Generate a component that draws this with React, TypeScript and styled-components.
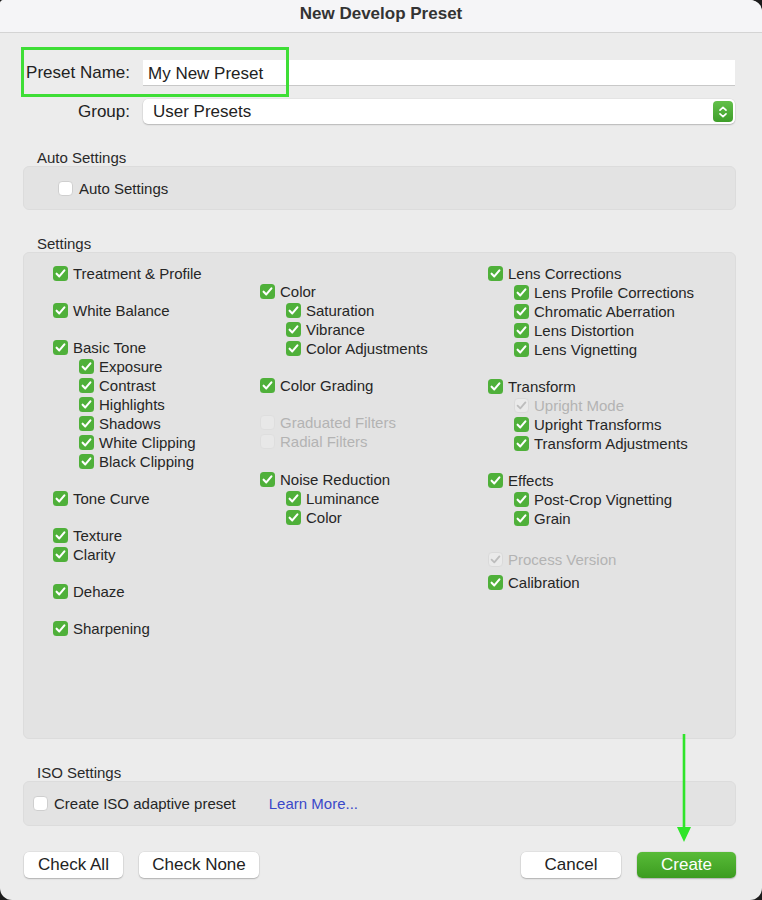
import React from 'react';
import styled, { createGlobalStyle } from 'styled-components';

const Global = createGlobalStyle`
    html, body {
        margin: 0;
        background: #1c1c1c;
    }
    body {
        font-family: "Liberation Sans", Arial, sans-serif;
        color: #222;
    }
`;

const Window = styled.div`
    position: relative;
    width: 762px;
    height: 900px;
    background: #ececec;
    border-radius: 4px 12px 12px 12px;
    overflow: hidden;
    display: flex;
    flex-direction: column;
`;

const TitleBar = styled.div`
    height: 33px;
    flex: none;
    box-sizing: border-box;
    padding-bottom: 4px;
    background: #f5f5f7;
    border-bottom: 1px solid #d4d4d4;
    display: flex;
    align-items: center;
    justify-content: center;
    font-size: 17px;
    font-weight: bold;
    color: #333;
`;

const Content = styled.div`
    display: flex;
    flex-direction: column;
    padding: 0 26px 0 23px;
`;

const FormGrid = styled.div`
    display: grid;
    grid-template-columns: 107px 1fr;
    column-gap: 13px;
    row-gap: 13px;
    align-items: center;
    margin-top: 27px;
    padding-right: 1px;
`;

const FieldLabel = styled.div`
    text-align: right;
    font-size: 17px;
    color: #222;
`;

const TextInput = styled.div`
    height: 26px;
    background: #fff;
    border-bottom: 1px solid #c8c8c8;
    display: flex;
    align-items: center;
    padding: 3px 0 0 5px;
    font-size: 17px;
    box-sizing: border-box;
`;

const Select = styled.div`
    height: 25px;
    background: #fff;
    border-radius: 5px;
    box-shadow: 0 1px 1.5px rgba(0, 0, 0, 0.2), 0 0 0 0.5px rgba(0, 0, 0, 0.06);
    display: flex;
    align-items: center;
    justify-content: space-between;
    padding: 0 2px 0 10px;
    font-size: 17px;
`;

const Stepper = styled.div`
    width: 20px;
    height: 21px;
    border-radius: 4px;
    background: linear-gradient(#62c04a, #3f9e2a);
    display: flex;
    align-items: center;
    justify-content: center;
`;

const SectionLabel = styled.div<{ $top: number }>`
    margin-top: ${(p) => p.$top}px;
    padding-left: 14px;
    height: 17px;
    font-size: 15px;
    line-height: 17px;
    color: #2a2a2a;
`;

const Panel = styled.div<{ $height: number }>`
    height: ${(p) => p.$height}px;
    box-sizing: border-box;
    background: #e3e3e3;
    border: 1px solid #dcdcdc;
    border-radius: 6px;
`;

const PanelRow = styled.div<{ $pad: number }>`
    height: 100%;
    display: flex;
    align-items: center;
    padding-left: ${(p) => p.$pad}px;
    gap: 33px;
`;

const SettingsGrid = styled.div`
    display: grid;
    grid-template-columns: 207px 228px 1fr;
    padding: 11px 0 0 29px;
`;

const Column = styled.div<{ $offset?: number }>`
    display: flex;
    flex-direction: column;
    padding-top: ${(p) => p.$offset || 0}px;
`;

const Item = styled.label<{ $sub?: boolean; $gap?: number; $disabled?: boolean }>`
    display: flex;
    align-items: center;
    gap: 5px;
    height: 19px;
    margin-top: ${(p) => p.$gap || 0}px;
    padding-left: ${(p) => (p.$sub ? 26 : 0)}px;
    font-size: 15px;
    color: ${(p) => (p.$disabled ? '#b3b3b3' : '#262626')};
    white-space: nowrap;
`;

const Inline = styled.div`
    display: flex;
    align-items: center;
    gap: 6px;
    font-size: 15px;
    color: #262626;
`;

const Link = styled.span`
    font-size: 15px;
    color: #3a48c9;
`;

const ButtonBar = styled.div`
    display: flex;
    align-items: center;
    gap: 16px;
    margin-top: 26px;
    padding-left: 1px;
`;

const Spacer = styled.div`
    flex: 1;
`;

const Button = styled.div<{ $width: number; $primary?: boolean }>`
    width: ${(p) => p.$width}px;
    height: 26px;
    border-radius: 5px;
    display: flex;
    align-items: center;
    justify-content: center;
    font-size: 17px;
    color: ${(p) => (p.$primary ? '#fff' : '#222')};
    background: ${(p) => (p.$primary ? 'linear-gradient(#58bb38, #3c9c20)' : '#fff')};
    box-shadow: 0 1px 1.5px rgba(0, 0, 0, 0.22), 0 0 0 0.5px rgba(0, 0, 0, 0.08);
`;

const Highlight = styled.div`
    position: absolute;
    left: 21px;
    top: 47px;
    width: 268px;
    height: 50px;
    box-sizing: border-box;
    border: 3px solid #3ede36;
    pointer-events: none;
`;

const Arrow = styled.svg`
    position: absolute;
    left: 676px;
    top: 734px;
    pointer-events: none;
`;

type State = 'on' | 'off' | 'dim' | 'dimOn';

function Check({ state }: { state: State }) {
    if (state === 'on') {
        return (
            <svg width="15" height="15" viewBox="0 0 15 15">
                <rect x="0" y="0" width="15" height="15" rx="3.5" fill="#4fb03a" />
                <path d="M3.6 7.7 L6.3 10.4 L11.4 4.4" stroke="#fff" strokeWidth="2.1" fill="none" strokeLinecap="round" strokeLinejoin="round" />
            </svg>
        );
    }
    if (state === 'dimOn') {
        return (
            <svg width="15" height="15" viewBox="0 0 15 15">
                <rect x="0.5" y="0.5" width="14" height="14" rx="3.5" fill="#eaeaea" stroke="#dadada" />
                <path d="M3.6 7.7 L6.3 10.4 L11.4 4.4" stroke="#bdbdbd" strokeWidth="1.8" fill="none" strokeLinecap="round" strokeLinejoin="round" />
            </svg>
        );
    }
    const dim = state === 'dim';
    return (
        <svg width="15" height="15" viewBox="0 0 15 15">
            <rect x="0.5" y="0.5" width="14" height="14" rx="3.5" fill={dim ? '#e8e8e8' : '#fff'} stroke={dim ? '#dedede' : '#cfcfcf'} />
        </svg>
    );
}

type Entry = { label: string; sub?: boolean; gap?: number; state?: State };

const col1: Entry[] = [
    { label: 'Treatment & Profile' },
    { label: 'White Balance', gap: 18 },
    { label: 'Basic Tone', gap: 18 },
    { label: 'Exposure', sub: true },
    { label: 'Contrast', sub: true },
    { label: 'Highlights', sub: true },
    { label: 'Shadows', sub: true },
    { label: 'White Clipping', sub: true },
    { label: 'Black Clipping', sub: true },
    { label: 'Tone Curve', gap: 18 },
    { label: 'Texture', gap: 18 },
    { label: 'Clarity' },
    { label: 'Dehaze', gap: 18 },
    { label: 'Sharpening', gap: 18 },
];

const col2: Entry[] = [
    { label: 'Color' },
    { label: 'Saturation', sub: true },
    { label: 'Vibrance', sub: true },
    { label: 'Color Adjustments', sub: true },
    { label: 'Color Grading', gap: 18 },
    { label: 'Graduated Filters', gap: 18, state: 'dim' },
    { label: 'Radial Filters', state: 'dim' },
    { label: 'Noise Reduction', gap: 19 },
    { label: 'Luminance', sub: true },
    { label: 'Color', sub: true },
];

const col3: Entry[] = [
    { label: 'Lens Corrections' },
    { label: 'Lens Profile Corrections', sub: true },
    { label: 'Chromatic Aberration', sub: true },
    { label: 'Lens Distortion', sub: true },
    { label: 'Lens Vignetting', sub: true },
    { label: 'Transform', gap: 18 },
    { label: 'Upright Mode', sub: true, state: 'dimOn' },
    { label: 'Upright Transforms', sub: true },
    { label: 'Transform Adjustments', sub: true },
    { label: 'Effects', gap: 18 },
    { label: 'Post-Crop Vignetting', sub: true },
    { label: 'Grain', sub: true },
    { label: 'Process Version', gap: 22, state: 'dimOn' },
    { label: 'Calibration', gap: 4 },
];

function CheckColumn({ items, offset }: { items: Entry[]; offset?: number }) {
    return (
        <Column $offset={offset}>
            {items.map((it, i) => {
                const state = it.state || 'on';
                return (
                    <Item key={i} $sub={it.sub} $gap={it.gap} $disabled={state === 'dim' || state === 'dimOn'}>
                        <Check state={state} />
                        {it.label}
                    </Item>
                );
            })}
        </Column>
    );
}

export default function App() {
    return (
        <Window>
            <Global />
            <TitleBar>New Develop Preset</TitleBar>
            <Content>
                <FormGrid>
                    <FieldLabel>Preset Name:</FieldLabel>
                    <TextInput>My New Preset</TextInput>
                    <FieldLabel>Group:</FieldLabel>
                    <Select>
                        User Presets
                        <Stepper>
                            <svg width="10" height="14" viewBox="0 0 10 14">
                                <path d="M2 5.2 L5 2.4 L8 5.2 M2 8.8 L5 11.6 L8 8.8" stroke="#fff" strokeWidth="1.7" fill="none" strokeLinecap="round" strokeLinejoin="round" />
                            </svg>
                        </Stepper>
                    </Select>
                </FormGrid>

                <SectionLabel $top={25}>Auto Settings</SectionLabel>
                <Panel $height={44}>
                    <PanelRow $pad={34}>
                        <Inline>
                            <Check state="off" />
                            Auto Settings
                        </Inline>
                    </PanelRow>
                </Panel>

                <SectionLabel $top={25}>Settings</SectionLabel>
                <Panel $height={487}>
                    <SettingsGrid>
                        <CheckColumn items={col1} />
                        <CheckColumn items={col2} offset={18} />
                        <CheckColumn items={col3} />
                    </SettingsGrid>
                </Panel>

                <SectionLabel $top={25}>ISO Settings</SectionLabel>
                <Panel $height={45}>
                    <PanelRow $pad={9}>
                        <Inline>
                            <Check state="off" />
                            Create ISO adaptive preset
                        </Inline>
                        <Link>Learn More...</Link>
                    </PanelRow>
                </Panel>

                <ButtonBar>
                    <Button $width={99}>Check All</Button>
                    <Button $width={120}>Check None</Button>
                    <Spacer />
                    <Button $width={100}>Cancel</Button>
                    <Button $width={99} $primary>Create</Button>
                </ButtonBar>
            </Content>

            <Highlight />
            <Arrow width="16" height="110" viewBox="0 0 16 110">
                <line x1="8" y1="0" x2="8" y2="94" stroke="#2fe52a" strokeWidth="2.6" />
                <path d="M1 93 L15 93 L8 108 Z" fill="#2fe52a" />
            </Arrow>
        </Window>
    );
}
